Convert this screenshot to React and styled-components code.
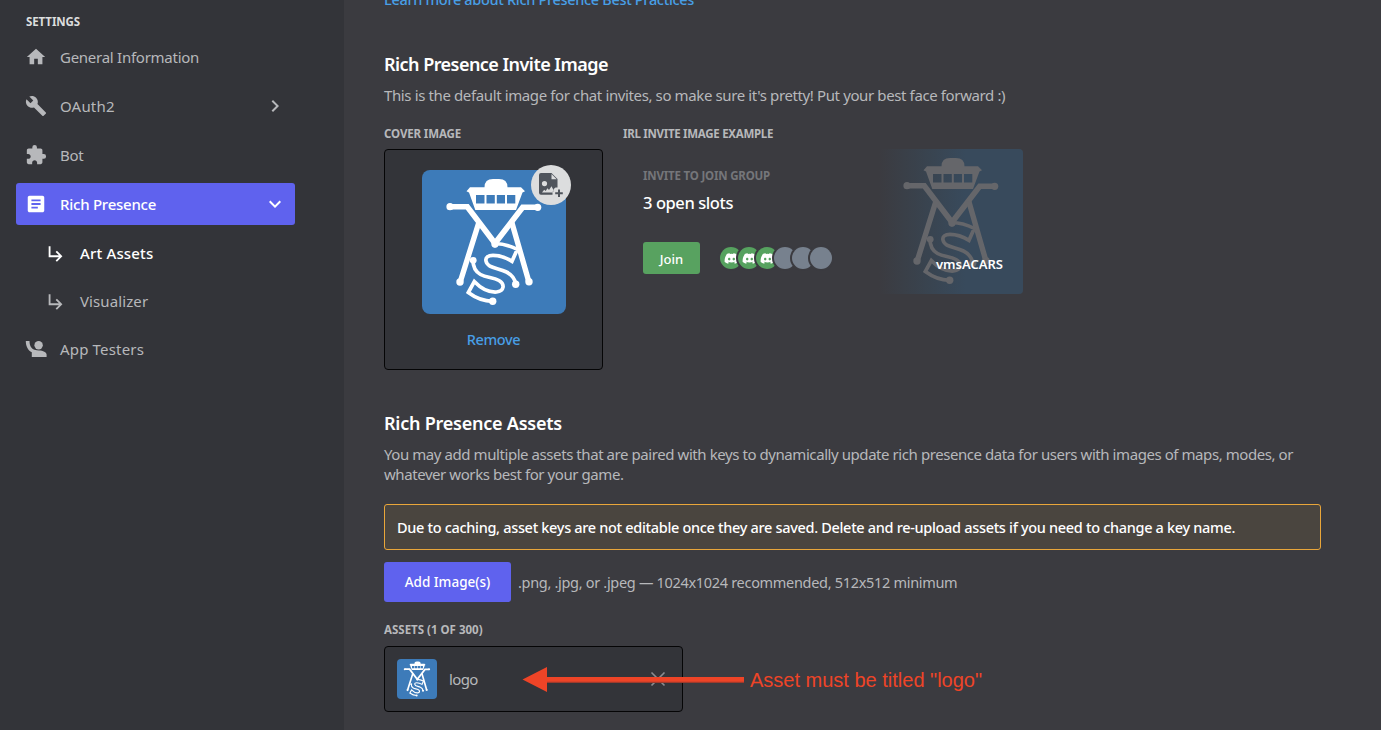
import React from "react";
import styled, { createGlobalStyle } from "styled-components";
import {
  MdHome,
  MdBuild,
  MdExtension,
  MdArticle,
  MdSubdirectoryArrowRight,
  MdChevronRight,
  MdExpandMore,
} from "react-icons/md";
import { FaDiscord } from "react-icons/fa";

const color = {
  sidebar: "#333439",
  main: "#3b3b40",
  muted: "#b7b8bb",
  blurple: "#5f62ee",
  link: "#489fe6",
  green: "#58a260",
  logo: "#3d7bb9",
};

const GlobalStyle = createGlobalStyle`
  *, *::before, *::after { box-sizing: border-box; }
  body {
    margin: 0;
    overflow: hidden;
    background: ${color.main};
    font-family: "Noto Sans", "Open Sans", sans-serif;
    color: ${color.muted};
  }
  h2, p { margin: 0; }
  svg { display: block; }
`;

const Page = styled.div`
  display: flex;
  width: 1381px;
  height: 730px;
  overflow: hidden;
`;

const Sidebar = styled.nav`
  flex: none;
  width: 344px;
  padding: 14px 49px 0 16px;
  background: ${color.sidebar};
`;

const Caption = styled.div`
  height: 16px;
  font-size: 11.5px;
  font-weight: 700;
  line-height: 16px;
  letter-spacing: ${(p) => p.$spacing || 0}px;
  white-space: nowrap;
  color: ${(p) => p.$tone || color.muted};
`;

const SidebarCaption = styled(Caption)`
  padding-left: 10px;
  margin-bottom: 6px;
`;

const NavItem = styled.div`
  display: flex;
  align-items: center;
  height: 42px;
  margin-bottom: ${(p) => p.$gap ?? 7}px;
  padding: 0 8px 0 ${(p) => (p.$nested ? 29 : 9)}px;
  border-radius: 3px;
  background: ${(p) => (p.$selected ? color.blurple : "transparent")};
  color: ${(p) => (p.$bright ? "#fff" : color.muted)};
  font-size: 15px;
  font-weight: ${(p) => (p.$bright ? 500 : 400)};
  letter-spacing: ${(p) => p.$spacing || 0}px;
`;

const NavIcon = styled.span`
  display: flex;
  flex: none;
  justify-content: center;
  width: 22px;
  margin-right: 13px;
  font-size: ${(p) => p.$size || 24}px;
`;

const NavLabel = styled.span`
  flex: 1;
  white-space: nowrap;
`;

const Main = styled.main`
  flex: 1;
  min-width: 0;
  padding: 0 60px 0 40px;
`;

const LearnLink = styled.div`
  height: 20px;
  margin-top: -11px;
  font-size: 14.5px;
  font-weight: 500;
  line-height: 20px;
  letter-spacing: -0.32px;
  color: ${color.link};
`;

const Heading = styled.h2`
  height: 24px;
  margin-top: ${(p) => p.$top}px;
  font-size: 18px;
  font-weight: 600;
  line-height: 24px;
  letter-spacing: ${(p) => p.$spacing}px;
  color: #fff;
`;

const Description = styled.p`
  margin-top: 9px;
  font-size: 15px;
  line-height: 20px;
  letter-spacing: ${(p) => p.$spacing}px;
  white-space: nowrap;
`;

const InviteColumns = styled.div`
  display: flex;
  gap: 20px;
  margin-top: 21px;
`;

const Column = styled.section`
  width: ${(p) => p.$width}px;
`;

const CoverCard = styled.div`
  display: flex;
  flex-direction: column;
  align-items: center;
  height: 221px;
  margin-top: 7px;
  padding-top: 20px;
  border: 1px solid #050506;
  border-radius: 4px;
  background: ${color.sidebar};
`;

const CoverImage = styled.div`
  position: relative;
  width: 144px;
  height: 144px;
`;

const LogoTile = styled.div`
  width: ${(p) => p.$size}px;
  height: ${(p) => p.$size}px;
  flex: none;
  overflow: hidden;
  border-radius: ${(p) => p.$radius}px;
  background: ${color.logo};
  color: #fff;
`;

const UploadBadge = styled.div`
  position: absolute;
  top: -5px;
  right: -5px;
  display: flex;
  width: 40px;
  height: 40px;
  border-radius: 50%;
  background: #dcddde;
  color: #4f545c;
`;

const RemoveLink = styled.div`
  margin-top: 15px;
  font-size: 14.5px;
  font-weight: 500;
  line-height: 20px;
  letter-spacing: -0.4px;
  color: ${color.link};
`;

const InvitePreview = styled.div`
  display: flex;
  justify-content: space-between;
  height: 145px;
  margin-top: 7px;
  padding-left: 20px;
`;

const InviteInfo = styled.div`
  padding-top: 19px;
`;

const Slots = styled.div`
  margin-top: 7px;
  font-size: 16.5px;
  font-weight: 500;
  line-height: 24px;
  letter-spacing: -0.42px;
  color: #fff;
`;

const JoinRow = styled.div`
  display: flex;
  align-items: center;
  gap: 20px;
  margin-top: 27px;
`;

const JoinButton = styled.div`
  width: 57px;
  height: 32px;
  border-radius: 3px;
  background: ${color.green};
  color: #fff;
  font-size: 13px;
  font-weight: 500;
  line-height: 34px;
  text-align: center;
`;

const Avatars = styled.div`
  display: flex;
`;

const Avatar = styled.div`
  display: flex;
  align-items: center;
  width: 22px;
  height: 22px;
  margin-right: -4px;
  padding-left: 4px;
  border-radius: 50%;
  box-shadow: 0 0 0 2px ${color.main};
  background: ${(p) => (p.$filled ? "#56a25f" : "#77818e")};
  color: #fff;
  font-size: 15px;
`;

const InviteArt = styled.div`
  position: relative;
  width: 144px;
  height: 145px;
  overflow: hidden;
  border-radius: 0 4px 4px 0;
  background: linear-gradient(90deg, ${color.main} 0%, #394450 35%, #384a5c 60%, #384a5c 100%);
  color: #65666a;
`;

const GameName = styled.div`
  position: absolute;
  right: 20px;
  bottom: 20px;
  font-size: 13px;
  font-weight: 600;
  line-height: 20px;
  color: #fff;
`;

const Notice = styled.div`
  height: 46px;
  margin-top: 20px;
  padding-left: 12px;
  border: 1px solid #e9a63a;
  border-radius: 3px;
  background: #4a453f;
  color: #fff;
  font-size: 14.5px;
  font-weight: 500;
  line-height: 45px;
  letter-spacing: -0.32px;
  white-space: nowrap;
`;

const UploadRow = styled.div`
  display: flex;
  align-items: center;
  gap: 7px;
  margin-top: 12px;
`;

const AddButton = styled.div`
  width: 127px;
  height: 40px;
  border-radius: 3px;
  background: ${color.blurple};
  color: #fff;
  font-size: 13.5px;
  font-weight: 500;
  line-height: 40px;
  text-align: center;
`;

const FormatHint = styled.span`
  font-size: 14.5px;
  line-height: 20px;
  letter-spacing: -0.31px;
`;

const AssetCaption = styled(Caption)`
  margin-top: 20px;
`;

const AssetCard = styled.div`
  position: relative;
  display: flex;
  align-items: center;
  width: 299px;
  height: 66px;
  margin-top: 8px;
  padding: 0 16px 0 12px;
  border: 1px solid #050506;
  border-radius: 4px;
  background: ${color.sidebar};
`;

const AssetName = styled.span`
  flex: 1;
  margin-left: 12px;
  font-size: 15px;
  letter-spacing: -0.6px;
`;

const Annotation = styled.div`
  position: absolute;
  top: 20px;
  left: 137px;
  display: flex;
  align-items: center;
  gap: 6px;
  color: #ee4427;
  font-family: "Liberation Sans", Arial, sans-serif;
  font-size: 20px;
  line-height: 26px;
  white-space: nowrap;
`;

function TowerMark({ size, weight = 1 }) {
  return (
    <svg width={size} height={size} viewBox="0 0 144 144" fill="none" stroke="currentColor">
      <path
        stroke="none"
        fill="currentColor"
        fillRule="evenodd"
        d="M48 17.3H62.5Q62.5 9 71 9H77Q85.5 9 85.5 17.3H99L103 21.3 100.5 22.6 94 40H53.3L47 22.6 44.5 21.3ZM54 25V33.6H62.5V25ZM64.5 25V33.6H72.8V25ZM74.8 25V33.6H83V25ZM85 25V33.6H93.3V25Z"
      />
      <path strokeWidth={5.6 * weight} d="M28 36.7H45.3L73 73.3 100.7 37.3H115.7" />
      <path strokeWidth={5.4 * weight} d="M57 52 38.2 112M89.7 52 106.8 111.5" />
      <path
        strokeWidth={3.7 * weight}
        d="M73 73.5C82 73.7 89 76.3 95.3 79.3L90 91.3C83 87 76 85.4 71 85.4C66 85.4 63.2 87.5 64 91C65.5 98.5 76 97.5 84.5 102C90.5 105 93 109 93.8 114.3M51 90.3C51 97 53 101.5 58.5 104.5C65 108 71 107 77 110.5C83 114 82.5 121 74.5 122C66.5 122.5 58 117.5 52.3 111.5L46.3 122.5C53 127.5 61 131.2 70.7 131.3"
      />
      <g stroke="none" fill="currentColor">
        <circle cx="28" cy="36.7" r="3.6" />
        <circle cx="115.7" cy="37.3" r="3.6" />
        <circle cx="73" cy="74" r="3.7" />
        <circle cx="38" cy="112" r="3.7" />
        <circle cx="107" cy="111.7" r="3.7" />
        <circle cx="51.2" cy="90.3" r="3.4" />
        <circle cx="93.7" cy="114.2" r="3.7" />
        <circle cx="70.7" cy="131.3" r="3.7" />
      </g>
    </svg>
  );
}

function TesterIcon() {
  return (
    <svg width="22" height="18" viewBox="0 0 22 18" fill="currentColor">
      <circle cx="13.6" cy="5.2" r="4.2" />
      <path d="M.8 1H4.5C4.5 5 6 8.6 9.5 9.8C11 10.4 12.5 10.5 14 10.5C18 10.5 21.6 12.3 21.6 14.6V17H6.8V12.3C2.900 10.2.8 6.200.8 1Z" />
    </svg>
  );
}

function UploadIcon() {
  return (
    <svg width="40" height="40" viewBox="0 0 40 40" fill="currentColor">
      <path
        fillRule="evenodd"
        d="M10 8H20.5L26.5 14V22.5H24.500Q22.500 23.500 22.500 25.500V26.500H21.500V29.800H10Q8 29.800 8 27.800V10Q8 8 10 8ZM20.500 9V14.300H25.700ZM13.500 16A2.600 2.600 0 1 0 13.500 21.200A2.600 2.600 0 1 0 13.500 16ZM11 27.500H21.500L22.500 25 20.500 21.300 18 25 16.500 23.200 14.700 26 13.200 24.800Z"
      />
      <path d="M27 24.500H29V27.300H31.800V29.300H29V32.100H27V29.300H24.200V27.300H27Z" />
    </svg>
  );
}

function CloseIcon() {
  return (
    <svg width="16" height="16" viewBox="0 0 16 16" stroke="#8b8c90" strokeWidth="1.6" fill="none">
      <path d="M1.5 1.5 14.5 14.5M14.5 1.5 1.5 14.5" />
    </svg>
  );
}

function ArrowLeft() {
  return (
    <svg width="222" height="26" viewBox="0 0 222 26">
      <path fill="#9f3a2c" d="M24 14H222V16H24Z" />
      <path fill="#ee4427" d="M.5 12.500 25 0V10H222V14.700H25V25Z" />
    </svg>
  );
}

export default function App() {
  return (
    <>
      <GlobalStyle />
      <Page>
        <Sidebar>
          <SidebarCaption $tone="#dcddde" $spacing={-0.09}>SETTINGS</SidebarCaption>
          <NavItem $spacing={-0.26}>
            <NavIcon $size={24}><MdHome /></NavIcon>
            <NavLabel>General Information</NavLabel>
          </NavItem>
          <NavItem $spacing={0.2}>
            <NavIcon><MdBuild /></NavIcon>
            <NavLabel>OAuth2</NavLabel>
            <MdChevronRight size={24} />
          </NavItem>
          <NavItem $spacing={-0.3}>
            <NavIcon><MdExtension /></NavIcon>
            <NavLabel>Bot</NavLabel>
          </NavItem>
          <NavItem $selected $bright $spacing={-0.25}>
            <NavIcon><MdArticle /></NavIcon>
            <NavLabel>Rich Presence</NavLabel>
            <MdExpandMore size={24} />
          </NavItem>
          <NavItem $nested $bright $gap={6} $spacing={0.15}>
            <NavIcon $size={23}><MdSubdirectoryArrowRight /></NavIcon>
            <NavLabel>Art Assets</NavLabel>
          </NavItem>
          <NavItem $nested $gap={6} $spacing={0.1}>
            <NavIcon $size={23}><MdSubdirectoryArrowRight /></NavIcon>
            <NavLabel>Visualizer</NavLabel>
          </NavItem>
          <NavItem $spacing={0.17}>
            <NavIcon><TesterIcon /></NavIcon>
            <NavLabel>App Testers</NavLabel>
          </NavItem>
        </Sidebar>

        <Main>
          <LearnLink>Learn more about Rich Presence Best Practices</LearnLink>
          <Heading $top={43} $spacing={-0.54}>Rich Presence Invite Image</Heading>
          <Description $spacing={-0.38}>
            This is the default image for chat invites, so make sure it's pretty! Put your best face forward :)
          </Description>

          <InviteColumns>
            <Column $width={219}>
              <Caption $spacing={-0.12}>COVER IMAGE</Caption>
              <CoverCard>
                <CoverImage>
                  <LogoTile $size={144} $radius={8}><TowerMark size={144} /></LogoTile>
                  <UploadBadge><UploadIcon /></UploadBadge>
                </CoverImage>
                <RemoveLink>Remove</RemoveLink>
              </CoverCard>
            </Column>
            <Column $width={400}>
              <Caption $spacing={-0.29}>IRL INVITE IMAGE EXAMPLE</Caption>
              <InvitePreview>
                <InviteInfo>
                  <Caption $tone="#75767a" $spacing={-0.19}>INVITE TO JOIN GROUP</Caption>
                  <Slots>3 open slots</Slots>
                  <JoinRow>
                    <JoinButton>Join</JoinButton>
                    <Avatars>
                      {[true, true, true, false, false, false].map((filled, i) => (
                        <Avatar key={i} $filled={filled}>{filled && <FaDiscord />}</Avatar>
                      ))}
                    </Avatars>
                  </JoinRow>
                </InviteInfo>
                <InviteArt>
                  <TowerMark size={144} />
                  <GameName>vmsACARS</GameName>
                </InviteArt>
              </InvitePreview>
            </Column>
          </InviteColumns>

          <Heading $top={41} $spacing={-0.23}>Rich Presence Assets</Heading>
          <Description $spacing={-0.43}>
            You may add multiple assets that are paired with keys to dynamically update rich presence data for users with images of maps, modes, or
            <br />
            whatever works best for your game.
          </Description>
          <Notice>
            Due to caching, asset keys are not editable once they are saved. Delete and re-upload assets if you need to change a key name.
          </Notice>
          <UploadRow>
            <AddButton>Add Image(s)</AddButton>
            <FormatHint>.png, .jpg, or .jpeg — 1024x1024 recommended, 512x512 minimum</FormatHint>
          </UploadRow>
          <AssetCaption>ASSETS (1 OF 300)</AssetCaption>
          <AssetCard>
            <LogoTile $size={40} $radius={4}><TowerMark size={40} weight={1.1} /></LogoTile>
            <AssetName>logo</AssetName>
            <CloseIcon />
            <Annotation>
              <ArrowLeft />
              Asset must be titled "logo"
            </Annotation>
          </AssetCard>
        </Main>
      </Page>
    </>
  );
}
